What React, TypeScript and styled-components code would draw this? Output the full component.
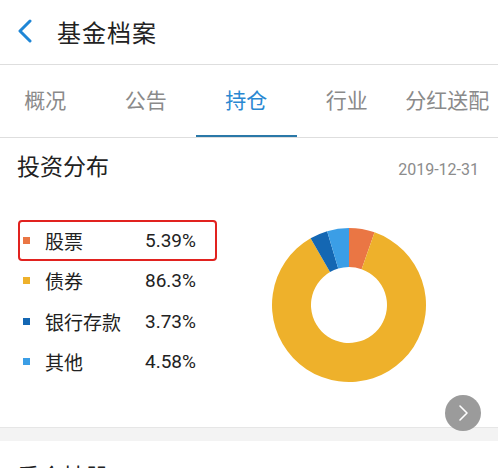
import React from 'react'
import styled, { createGlobalStyle } from 'styled-components'

const GlobalStyle = createGlobalStyle`
  html, body {
    margin: 0;
    padding: 0;
    background: #fff;
  }
  body {
    font-family: Roboto, "Noto Sans CJK SC", "Noto Sans", sans-serif;
    color: #222;
    overflow: hidden;
  }
`

interface Slice {
  label: string
  value: number
  color: string
  highlighted?: boolean
}

const slices: Slice[] = [
  { label: '股票', value: 5.39, color: '#ea7644', highlighted: true },
  { label: '债券', value: 86.3, color: '#eeb12b' },
  { label: '银行存款', value: 3.73, color: '#1467b3' },
  { label: '其他', value: 4.58, color: '#3b9ee6' },
]

const tabs = ['概况', '公告', '持仓', '行业', '分红送配']

function arcPath(cx: number, cy: number, r1: number, r2: number, a0: number, a1: number) {
  const p = (r: number, a: number) => {
    const rad = (a - 90) * Math.PI / 180
    return `${(cx + r * Math.cos(rad)).toFixed(2)} ${(cy + r * Math.sin(rad)).toFixed(2)}`
  }
  const large = a1 - a0 > 180 ? 1 : 0
  return `M ${p(r2, a0)} A ${r2} ${r2} 0 ${large} 1 ${p(r2, a1)} L ${p(r1, a1)} A ${r1} ${r1} 0 ${large} 0 ${p(r1, a0)} Z`
}

function Donut() {
  const total = slices.reduce((s, x) => s + x.value, 0)
  let start = 0
  return (
    <ChartSvg width="160" height="160" viewBox="0 0 160 160">
      {slices.map(s => {
        const end = start + (s.value / total) * 360
        const d = arcPath(80, 80, 38, 77, start, end)
        start = end
        return <path key={s.label} d={d} fill={s.color} />
      })}
    </ChartSvg>
  )
}

export default function App() {
  return (
    <Page>
      <GlobalStyle />
      <Header>
        <BackIcon width="16" height="24" viewBox="0 0 16 24">
          <polyline points="13,2 3,12 13,22" fill="none" stroke="#1f86d6" strokeWidth="3" strokeLinecap="round" strokeLinejoin="round" />
        </BackIcon>
        <Title>基金档案</Title>
      </Header>
      <TabBar>
        {tabs.map(t => (
          <Tab key={t} active={t === '持仓'}>{t}</Tab>
        ))}
      </TabBar>
      <Section>
        <SectionHead>
          <SectionTitle>投资分布</SectionTitle>
          <DateText>2019-12-31</DateText>
        </SectionHead>
        <Body>
          <Legend>
            {slices.map(s => (
              <LegendRow key={s.label} highlighted={s.highlighted}>
                <Marker color={s.color} />
                <LegendLabel>{s.label}</LegendLabel>
                <LegendValue>{s.value}%</LegendValue>
              </LegendRow>
            ))}
          </Legend>
          <Donut />
        </Body>
        <NextButton>
          <svg width="12" height="18" viewBox="0 0 12 18">
            <polyline points="3,2 10,9 3,16" fill="none" stroke="#fff" strokeWidth="1.6" strokeLinecap="round" strokeLinejoin="round" />
          </svg>
        </NextButton>
      </Section>
      <Gap />
      <NextSection>
        <SectionTitle>重仓持股</SectionTitle>
      </NextSection>
    </Page>
  )
}

const Page = styled.div`
  width: 498px;
  height: 468px;
  overflow: hidden;
`
const Header = styled.div`
  height: 64px;
  display: flex;
  align-items: center;
  padding-left: 17px;
  border-bottom: 1px solid #dedede;
  box-sizing: content-box;
`
const BackIcon = styled.svg`
  margin-top: -2px;
`
const Title = styled.h1`
  margin: 0 0 0 24px;
  font-size: 24px;
  font-weight: 400;
  color: #222;
  letter-spacing: 1px;
  margin-top: -2px;
`
const TabBar = styled.div`
  display: flex;
  height: 72px;
  margin-left: -5px;
  border-bottom: 1px solid #dedede;
  white-space: nowrap;
`
const Tab = styled.div<{ active?: boolean }>`
  flex: 0 0 100.5px;
  display: flex;
  align-items: center;
  justify-content: center;
  font-size: 21px;
  color: ${p => (p.active ? '#2a88d2' : '#8a8a8a')};
  border-bottom: 2px solid ${p => (p.active ? '#2a78a8' : 'transparent')};
  box-sizing: border-box;
  padding-bottom: 2px;
`
const Section = styled.div`
  position: relative;
  padding: 15px 19px 42px 17px;
  border-bottom: 1px solid #e6e6e6;
`
const SectionHead = styled.div`
  display: flex;
  align-items: baseline;
  justify-content: space-between;
  height: 30px;
`
const SectionTitle = styled.h2`
  margin: 0;
  font-size: 23px;
  font-weight: 400;
  color: #222;
  line-height: 30px;
`
const DateText = styled.span`
  font-size: 16px;
  color: #8c8c8c;
`
const Body = styled.div`
  display: flex;
  align-items: flex-start;
  margin-top: 31px;
`
const Legend = styled.div`
  display: flex;
  flex-direction: column;
  margin-top: 6px;
  margin-left: 1px;
`
const LegendRow = styled.div<{ highlighted?: boolean }>`
  width: 199px;
  height: 40.5px;
  box-sizing: border-box;
  display: flex;
  align-items: center;
  padding-left: 3px;
  border: 2px solid ${p => (p.highlighted ? '#e1221f' : 'transparent')};
  border-radius: 4px;
`
const Marker = styled.span<{ color: string }>`
  width: 7px;
  height: 7px;
  background: ${p => p.color};
  margin-right: 15px;
`
const LegendLabel = styled.span`
  width: 100px;
  font-size: 19px;
  color: #222;
`
const LegendValue = styled.span`
  font-size: 19px;
  color: #222;
`
const ChartSvg = styled.svg`
  margin-top: 11px;
  margin-left: 52px;
  flex: none;
`
const NextButton = styled.div`
  position: absolute;
  right: 17px;
  bottom: -4px;
  width: 36px;
  height: 36px;
  border-radius: 50%;
  background: #9b9b9b;
  display: flex;
  align-items: center;
  justify-content: center;
  z-index: 2;
`
const Gap = styled.div`
  height: 13px;
  background: #f3f3f3;
`
const NextSection = styled.div`
  padding: 22px 17px 0;
`
